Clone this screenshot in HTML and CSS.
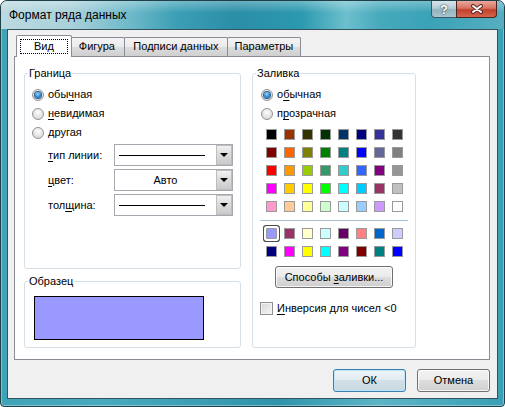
FILE: index.html
```html
<!DOCTYPE html>
<html lang="ru">
<head>
    <meta charset="UTF-8">
    <title>Формат ряда данных</title>
    <link rel="stylesheet" href="styles.css">
</head>
<body>
    <div class="window">
        <div class="titlebar">
            <span class="title">Формат ряда данных</span>
            <div class="caption-buttons">
                <div class="cap-btn cap-help">?</div>
                <div class="cap-btn cap-close">
                    <svg width="14" height="10" viewBox="0 0 14 10">
                        <path d="M3 2 L11 8 M11 2 L3 8" stroke="#5a2a22" stroke-width="4" stroke-linecap="round"/>
                        <path d="M3 2 L11 8 M11 2 L3 8" stroke="#fff" stroke-width="2" stroke-linecap="round"/>
                    </svg>
                </div>
            </div>
        </div>
        <div class="frame-body">
            <div class="client">
                <div class="tabs">
                    <div class="tab active"><span class="focus">Вид</span></div>
                    <div class="tab tab-shape">Фигура</div>
                    <div class="tab tab-labels">Подписи данных</div>
                    <div class="tab tab-params">Параметры</div>
                </div>
                <div class="panel">
                    <div class="col-left">
                        <fieldset class="group border-group">
                            <legend>Граница</legend>
                            <div class="radios">
                                <label class="radio"><span class="radio-box checked"></span><span>обы<u>ч</u>ная</span></label>
                                <label class="radio"><span class="radio-box"></span><span><u>н</u>евидимая</span></label>
                                <label class="radio"><span class="radio-box"></span><span>другая</span></label>
                            </div>
                            <div class="field">
                                <span class="field-label"><u>т</u>ип линии:</span>
                                <div class="combo"><span class="combo-value"><span class="line"></span></span><span class="drop"></span></div>
                            </div>
                            <div class="field">
                                <span class="field-label"><u>ц</u>вет:</span>
                                <div class="combo"><span class="combo-value">Авто</span><span class="drop"></span></div>
                            </div>
                            <div class="field">
                                <span class="field-label">тол<u>щ</u>ина:</span>
                                <div class="combo"><span class="combo-value"><span class="line"></span></span><span class="drop"></span></div>
                            </div>
                        </fieldset>
                        <fieldset class="group sample-group">
                            <legend>Образец</legend>
                            <div class="sample"></div>
                        </fieldset>
                    </div>
                    <fieldset class="group fill-group">
                        <legend>Заливка</legend>
                        <div class="radios">
                            <label class="radio"><span class="radio-box checked"></span><span>о<u>б</u>ычная</span></label>
                            <label class="radio"><span class="radio-box"></span><span>п<u>р</u>озрачная</span></label>
                        </div>
                        <div class="swatches" id="basicColors"></div>
                        <div class="separator"></div>
                        <div class="swatches chart-colors" id="chartColors"></div>
                        <button class="btn fill-btn">Способы <u>з</u>аливки...</button>
                        <label class="check"><span class="check-box"></span><span><u>И</u>нверсия для чисел &lt;0</span></label>
                    </fieldset>
                </div>
                <div class="dialog-buttons">
                    <button class="btn default">ОК</button>
                    <button class="btn">Отмена</button>
                </div>
            </div>
        </div>
    </div>

    <script>
        // standard 56-colour palette: 40 basic colours, then chart fills and chart lines
        const basic = [
            '#000000', '#993300', '#333300', '#003300', '#003366', '#000080', '#333399', '#333333',
            '#800000', '#ff6600', '#808000', '#008000', '#008080', '#0000ff', '#666699', '#808080',
            '#ff0000', '#ff9900', '#99cc00', '#339966', '#33cccc', '#3366ff', '#800080', '#969696',
            '#ff00ff', '#ffcc00', '#ffff00', '#00ff00', '#00ffff', '#00ccff', '#993366', '#c0c0c0',
            '#ff99cc', '#ffcc99', '#ffff99', '#ccffcc', '#ccffff', '#99ccff', '#cc99ff', '#ffffff'
        ];
        const chart = [
            '#9999ff', '#993366', '#ffffcc', '#ccffff', '#660066', '#ff8080', '#0066cc', '#ccccff',
            '#000080', '#ff00ff', '#ffff00', '#00ffff', '#800080', '#800000', '#008080', '#0000ff'
        ];

        function fillGrid(id, colors, selected) {
            const grid = document.getElementById(id);
            colors.forEach(function(color, i) {
                const cell = document.createElement('span');
                cell.className = 'swatch' + (i === selected ? ' selected' : '');
                cell.style.background = color;
                grid.appendChild(cell);
            });
        }

        fillGrid('basicColors', basic, -1);
        fillGrid('chartColors', chart, 0);
    </script>
</body>
</html>
```

FILE: styles.css
```css
* {
    box-sizing: border-box;
}
body {
    margin: 0;
    font-family: "Liberation Sans", Arial, sans-serif;
    font-size: 11px;
    line-height: 15px;
    color: #000;
}
u {
    text-decoration: underline;
    text-underline-offset: 2px;
}

/* window frame */
.window {
    width: 505px;
    height: 407px;
    border: 1px solid #1f3f49;
    border-radius: 7px 7px 4px 4px;
    overflow: hidden;
    display: flex;
    flex-direction: column;
    background: linear-gradient(90deg, #3fa3b8, #4aaabf 20%, #2f94ab 55%, #5db5c6 75%, #3aa0b5);
    box-shadow: inset 0 0 0 1px rgba(255, 255, 255, 0.35);
}
.titlebar {
    height: 28px;
    flex: none;
    display: flex;
    justify-content: space-between;
    padding: 0 7px 0 7px;
    background:
        linear-gradient(rgba(255, 255, 255, 0.3), rgba(255, 255, 255, 0) 12px),
        linear-gradient(90deg, #bcd9e0 0, #a9d1da 70px, #6db9c9 130px, #3c9fb5 175px, #2a8ea7 235px, #2b99af 300px, #6cbfcd 345px, #46a9bc 380px, #3aa2b7 430px, #57afc1 505px);
}
.title {
    align-self: center;
    padding-left: 1px;
    padding-top: 1px;
    font-size: 12px;
}
.caption-buttons {
    display: flex;
    align-items: flex-start;
}
.cap-btn {
    height: 17px;
    display: flex;
    align-items: center;
    justify-content: center;
    border: 1px solid #3f5962;
    border-top: none;
}
.cap-help {
    width: 25px;
    border-right: none;
    border-radius: 0 0 0 4px;
    background: linear-gradient(#d7e6eb, #b4cdd5 45%, #94b4bf 55%, #a8c6cf);
    color: #fff;
    font-weight: bold;
    font-size: 13px;
    text-shadow: 0 0 2px #2a4048, 0 0 1px #2a4048;
}
.cap-close {
    width: 41px;
    border-radius: 0 0 4px 0;
    border-color: #4a2520;
    background: linear-gradient(#e9a99b, #d87262 45%, #c1402c 55%, #d6654c);
}

.frame-body {
    flex: 1;
    display: flex;
    padding: 0 6px 7px 6px;
}
.client {
    flex: 1;
    display: flex;
    flex-direction: column;
    background-color: #f0f0f0;
    border: 1px solid #35535d;
    padding: 5px 7px 0 6px;
}

/* tabs */
.tabs {
    display: flex;
    align-items: flex-end;
    height: 21px;
    padding-left: 2px;
}
.tab {
    height: 19px;
    border: 1px solid #898c95;
    border-bottom: none;
    border-radius: 2px 2px 0 0;
    background: linear-gradient(#f3f3f3, #ebebeb 50%, #dddddd 50%, #cfcfcf);
    text-align: center;
    line-height: 17px;
    margin-left: -1px;
    white-space: nowrap;
}
.tab.active {
    position: relative;
    z-index: 1;
    height: 22px;
    margin: 0 -2px -1px 0;
    padding: 3px 3px 0 3px;
    background: #fff;
}
.focus {
    display: block;
    border: 1px dotted #000;
    padding: 0 13px;
    line-height: 13px;
}
.tab-shape {
    width: 56px;
}
.tab-labels {
    width: 104px;
}
.tab-params {
    width: 74px;
}

/* tab page */
.panel {
    height: 304px;
    flex: none;
    background-color: #fff;
    border: 1px solid #898c95;
    padding: 9px 0 0 9px;
    display: grid;
    grid-template-columns: 217px 164px;
    column-gap: 11px;
    align-items: start;
}
.col-left {
    display: flex;
    flex-direction: column;
    gap: 5px;
}
.group {
    margin: 0;
    padding: 0;
    min-width: 0;
    border: 1px solid #d5dfe5;
    border-radius: 3px;
}
.group legend {
    padding: 0 1px;
    margin-left: 3px;
    line-height: 14px;
}
.border-group {
    height: 203px;
}
.sample-group {
    height: 74px;
}
.fill-group {
    height: 282px;
}
.radios {
    margin-top: 5px;
}
.radio {
    display: flex;
    align-items: center;
    height: 19px;
    padding-left: 7px;
    gap: 4px;
}
.fill-group .radio {
    padding-left: 8px;
}
.radio-box {
    width: 12px;
    height: 12px;
    border-radius: 50%;
    border: 1px solid #949494;
    background: radial-gradient(circle at 50% 35%, #fdfdfd, #e2e2e2 60%, #cfcfcf);
    display: flex;
    align-items: center;
    justify-content: center;
}
.radio-box.checked::after {
    content: "";
    width: 6px;
    height: 6px;
    border-radius: 50%;
    background: radial-gradient(circle at 45% 35%, #9fd6fa, #2f86cf 55%, #12508e);
    box-shadow: 0 0 0 1px #1f5f94;
}

/* line style / colour pickers */
.field {
    display: flex;
    align-items: center;
    padding-left: 23px;
    margin-top: 3px;
}
.radios + .field {
    margin-top: 2px;
}
.field-label {
    width: 66px;
}
.combo {
    width: 119px;
    height: 22px;
    display: flex;
    border: 1px solid #a6a9b0;
    background-color: #fff;
}
.combo-value {
    flex: 1;
    display: flex;
    align-items: center;
    justify-content: center;
}
.line {
    width: 86px;
    height: 1px;
    margin-right: 7px;
    background-color: #000;
}
.drop {
    width: 16px;
    display: flex;
    align-items: center;
    justify-content: center;
    border: 1px solid #bdbdbd;
    background: linear-gradient(#f1f1f1, #dadada 50%, #cbcbcb);
}
.drop::after {
    content: "";
    border-left: 4px solid transparent;
    border-right: 4px solid transparent;
    border-top: 4px solid #000;
}
.sample {
    width: 170px;
    height: 44px;
    margin: 8px 0 0 9px;
    background-color: #9999ff;
    border: 1px solid #000;
}

/* fill palette */
.swatches {
    display: grid;
    grid-template-columns: repeat(8, 11px);
    grid-auto-rows: 11px;
    gap: 7px;
    margin: 6px 0 0 13px;
}
.swatch {
    border: 1px solid #9a9a9a;
}
.swatch.selected {
    border-radius: 1px;
    box-shadow: 0 0 0 2px #fff, 0 0 0 3px #4b4b4b;
}
.separator {
    width: 148px;
    height: 1px;
    margin: 8px 0 0 7px;
    background-color: #a8c1d4;
}
.chart-colors {
    margin-top: 7px;
}

/* buttons */
.btn {
    height: 23px;
    width: 73px;
    font: inherit;
    color: #000;
    padding: 0;
    border: 1px solid #707070;
    border-radius: 3px;
    background: linear-gradient(#f2f2f2, #ebebeb 50%, #dddddd 50%, #cfcfcf);
    box-shadow: inset 0 0 0 1px rgba(255, 255, 255, 0.8);
}
.btn.default {
    border-color: #3c7fb1;
    background: linear-gradient(#eef5f8, #e1ebf0 50%, #d2dfe6 50%, #c9d8e0);
    box-shadow: inset 0 0 0 1px #bfe4f7;
}
.fill-btn {
    display: block;
    width: 118px;
    height: 22px;
    margin: 9px 0 0 22px;
}
.check {
    display: flex;
    align-items: center;
    gap: 4px;
    margin: 14px 0 0 7px;
    height: 13px;
}
.check-box {
    width: 13px;
    height: 13px;
    border: 1px solid #8f8f8f;
    background: linear-gradient(135deg, #d6d6d6, #f7f7f7);
    box-shadow: inset 0 0 0 1px #f4f4f4;
}
.dialog-buttons {
    display: flex;
    justify-content: flex-end;
    gap: 11px;
    margin-top: 9px;
}
```
